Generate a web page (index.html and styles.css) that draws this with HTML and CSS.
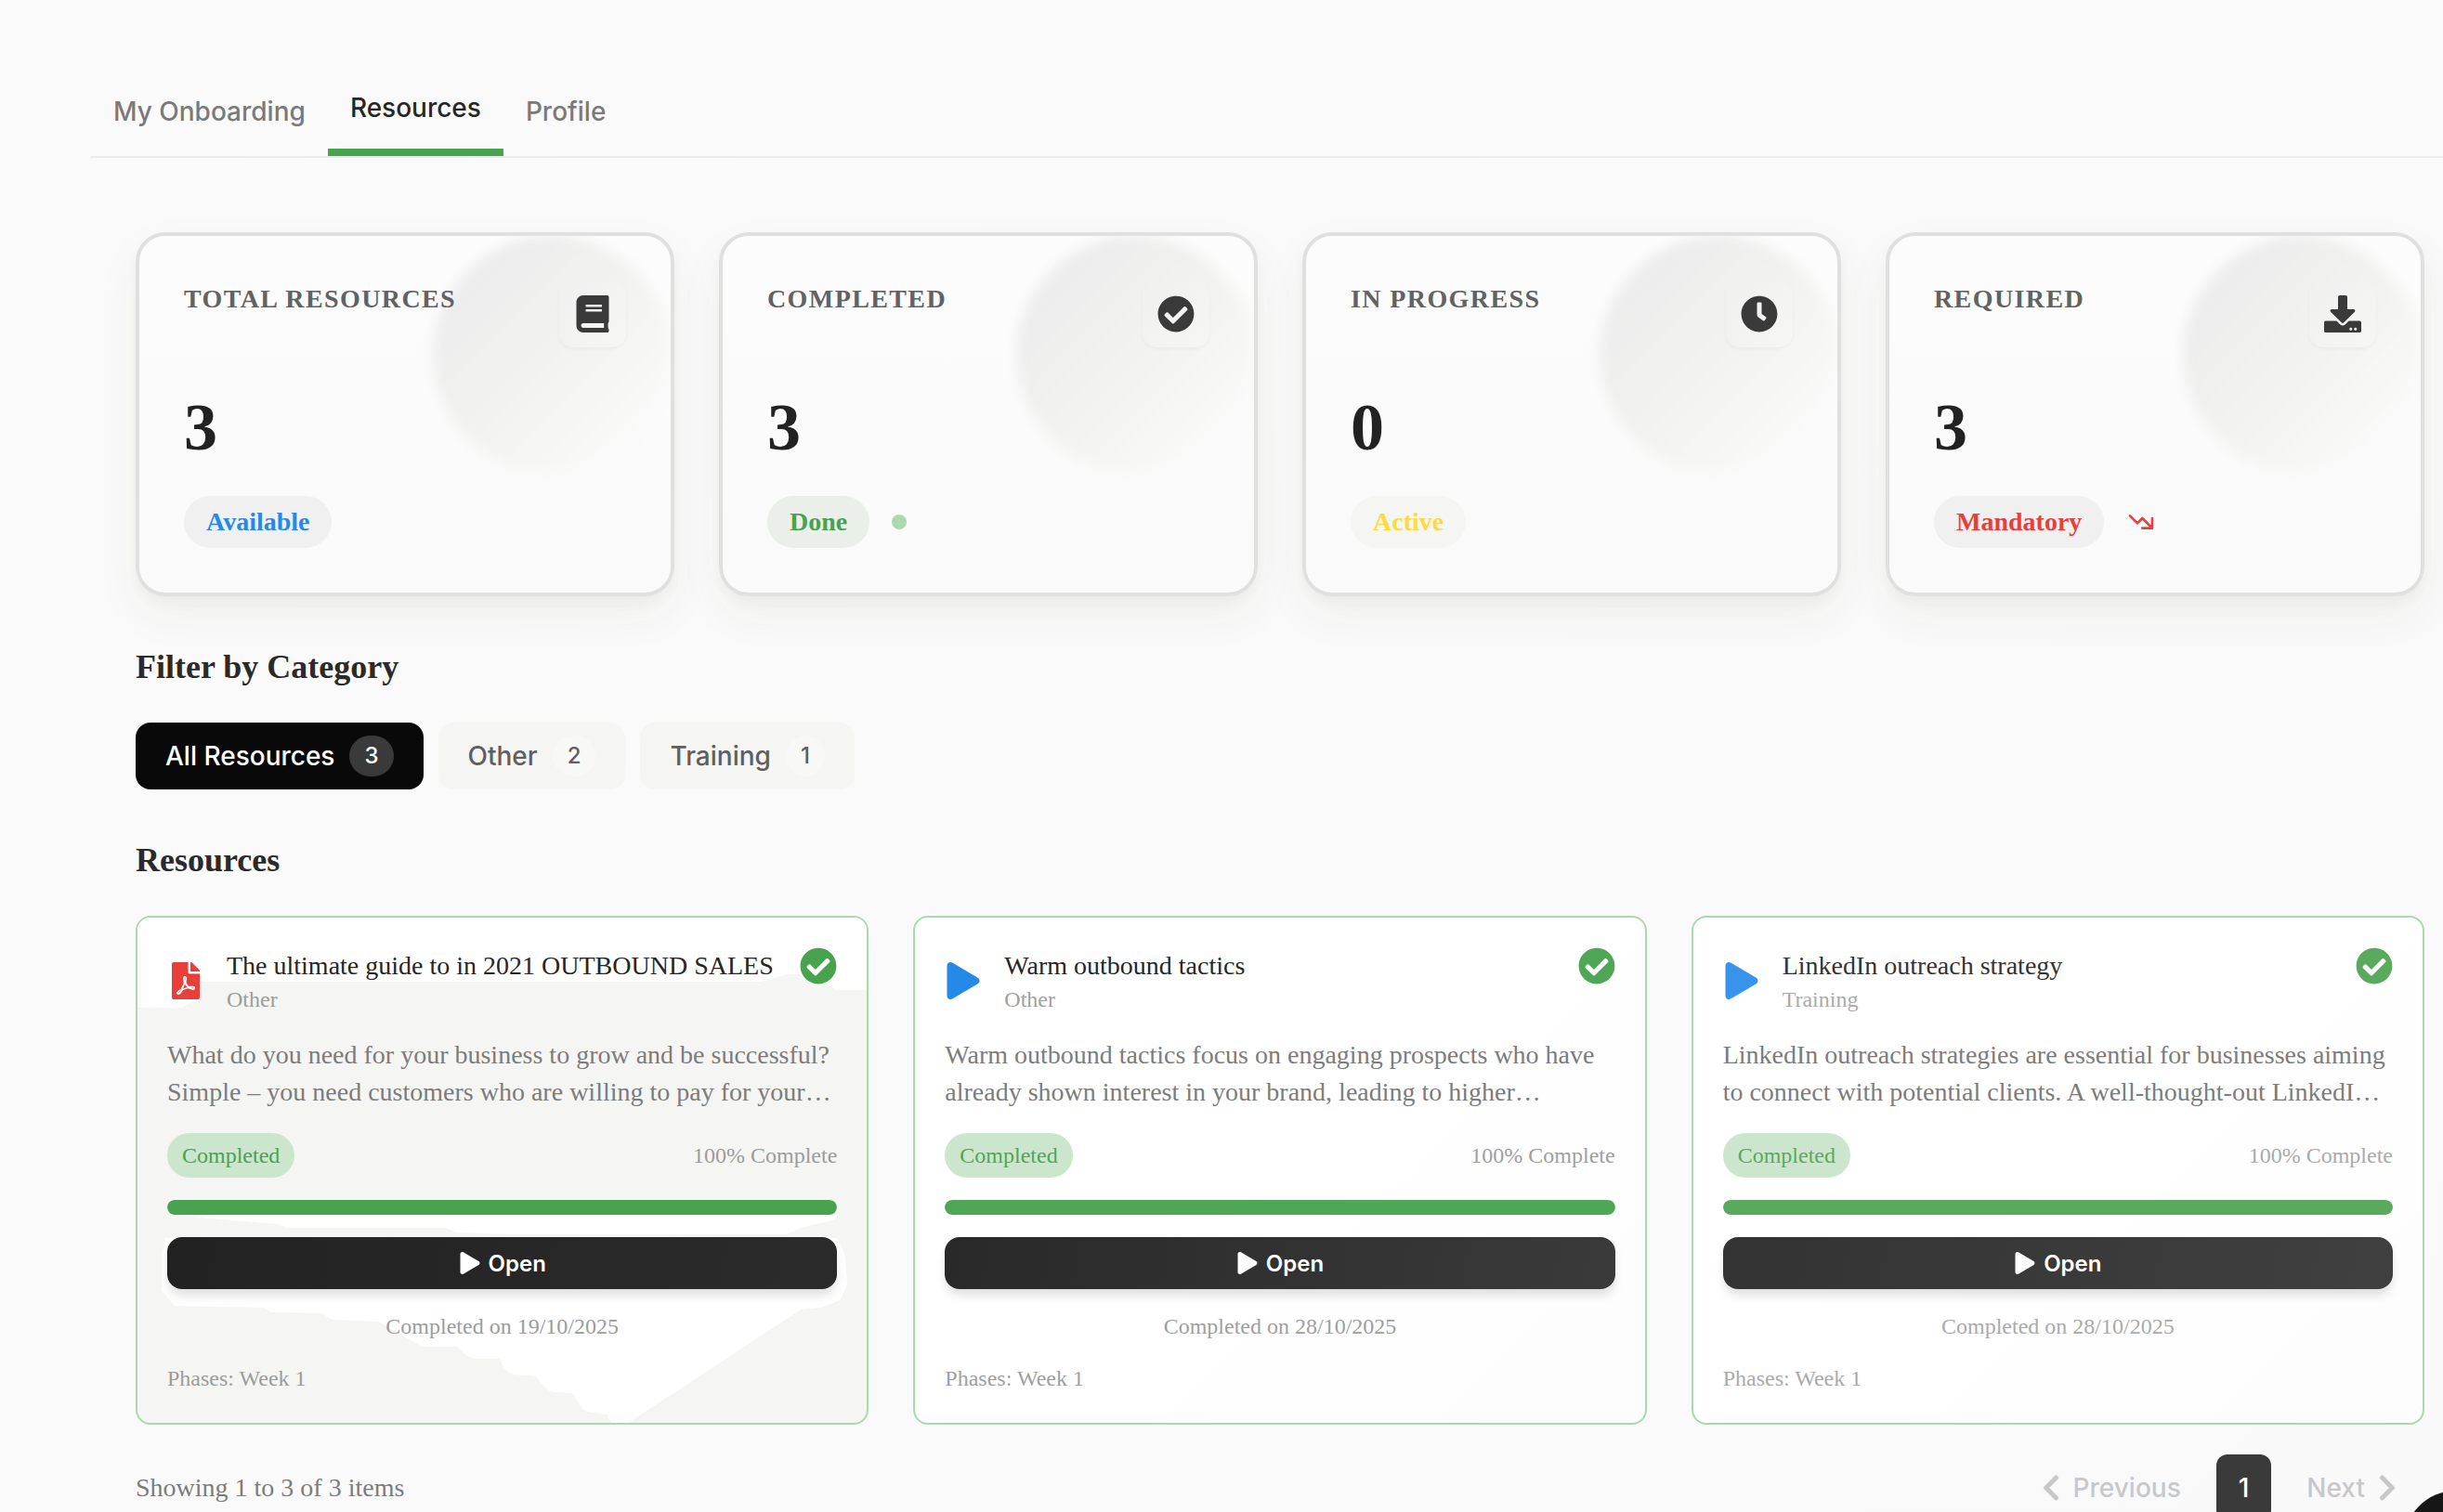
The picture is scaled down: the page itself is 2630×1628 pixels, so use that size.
FILE: index.html
```
<!DOCTYPE html>
<html lang="en">
<head>
  <meta charset="UTF-8">
  <meta name="viewport" content="width=device-width, initial-scale=1.0">
  <title>Onboarding - Resources</title>
  <link rel="stylesheet" href="styles.css">
</head>
<body>

  <!-- Icon sprite -->
  <svg class="sprite" aria-hidden="true">
    <symbol id="icon-book" viewBox="0 0 448 512"><path d="M448 360V24c0-13.3-10.7-24-24-24H96C43 0 0 43 0 96v320c0 53 43 96 96 96h328c13.3 0 24-10.7 24-24v-16c0-7.5-3.5-14.3-8.9-18.7-4.2-15.4-4.2-59.3 0-74.7 5.4-4.3 8.9-11.1 8.9-18.6zM128 134c0-3.3 2.7-6 6-6h212c3.3 0 6 2.7 6 6v20c0 3.3-2.7 6-6 6H134c-3.3 0-6-2.7-6-6v-20zm0 64c0-3.3 2.7-6 6-6h212c3.3 0 6 2.7 6 6v20c0 3.3-2.7 6-6 6H134c-3.3 0-6-2.7-6-6v-20zm253.4 250H96c-17.7 0-32-14.3-32-32 0-17.6 14.4-32 32-32h285.4c-1.9 17.1-1.9 46.9 0 64z"/></symbol>
    <symbol id="icon-check" viewBox="0 0 512 512"><path d="M504 256c0 136.967-111.033 248-248 248S8 392.967 8 256 119.033 8 256 8s248 111.033 248 248zM227.314 387.314l184-184c6.248-6.248 6.248-16.379 0-22.627l-22.627-22.627c-6.248-6.249-16.379-6.249-22.628 0L216 308.118l-70.059-70.059c-6.248-6.248-16.379-6.248-22.628 0l-22.627 22.627c-6.248 6.248-6.248 16.379 0 22.627l104 104c6.249 6.249 16.379 6.249 22.628.001z"/></symbol>
    <symbol id="icon-clock" viewBox="0 0 512 512"><path d="M256,8C119,8,8,119,8,256S119,504,256,504,504,393,504,256,393,8,256,8Zm92.49,313h0l-20,25a16,16,0,0,1-22.49,2.5h0l-67-49.72a40,40,0,0,1-15-31.23V112a16,16,0,0,1,16-16h32a16,16,0,0,1,16,16V256l58,42.5A16,16,0,0,1,348.49,321Z"/></symbol>
    <symbol id="icon-download" viewBox="0 0 512 512"><path d="M216 0h80c13.3 0 24 10.7 24 24v168h87.7c17.8 0 26.7 21.5 14.1 34.1L269.7 378.3c-7.5 7.5-19.8 7.5-27.3 0L90.1 226.1c-12.6-12.6-3.7-34.1 14.1-34.1H192V24c0-13.3 10.7-24 24-24zm296 376v112c0 13.3-10.7 24-24 24H24c-13.3 0-24-10.7-24-24V376c0-13.3 10.7-24 24-24h146.7l49 49c20.1 20.1 52.5 20.1 72.6 0l49-49H488c13.3 0 24 10.7 24 24zm-124 88c0-11-9-20-20-20s-20 9-20 20 9 20 20 20 20-9 20-20zm64 0c0-11-9-20-20-20s-20 9-20 20 9 20 20 20 20-9 20-20z"/></symbol>
    <symbol id="icon-play" viewBox="0 0 448 512"><path d="M424.4 214.7L72.4 6.6C43.8-10.3 0 6.1 0 47.9V464c0 37.5 40.7 60.1 72.4 41.3l352-208c31.4-18.5 31.5-64.1 0-82.6z"/></symbol>
    <symbol id="icon-pdf" viewBox="0 0 384 512"><path d="M181.9 256.1c-5-16-4.9-46.9-2-46.9 8.4 0 7.6 36.9 2 46.9zm-1.7 47.2c-7.7 20.2-17.3 43.3-28.4 62.7 18.3-7 39-17.2 62.9-21.9-12.7-9.6-24.9-23.4-34.5-40.8zM86.1 428.1c0 .8 13.2-5.4 34.9-40.2-6.7 6.3-29.1 24.5-34.9 40.2zM248 160h136v328c0 13.3-10.7 24-24 24H24c-13.3 0-24-10.7-24-24V24C0 10.7 10.7 0 24 0h200v136c0 13.2 10.8 24 24 24zm-8 171.8c-20-12.2-33.3-29-42.7-53.8 4.5-18.5 11.6-46.6 6.2-64.2-4.7-29.4-42.4-26.5-47.8-6.8-5 18.3-.4 44.1 8.1 77-11.6 27.6-28.7 64.6-40.8 85.8-.1 0-.1.1-.2.1-27.1 13.9-73.6 44.5-54.5 68 5.6 6.9 16 10 21.5 10 17.9 0 35.7-18 61.1-61.8 25.8-8.5 54.1-19.1 79-23.2 21.7 11.8 47.1 19.5 64 19.5 29.2 0 31.2-32 19.7-43.4-13.9-13.6-54.3-9.7-73.6-7.2zM377 105L279 7c-4.5-4.5-10.6-7-17-7h-6v128h128v-6.1c0-6.3-2.5-12.4-7-16.9zm-74.1 255.3c4.1-2.7-2.5-11.9-42.8-9 37.1 15.8 42.8 9 42.8 9z"/></symbol>
    <symbol id="icon-left" viewBox="0 0 320 512"><path d="M34.52 239.03L228.87 44.69c9.37-9.37 24.57-9.37 33.94 0l22.67 22.67c9.36 9.36 9.37 24.52.04 33.9L131.49 256l154.02 154.75c9.34 9.38 9.32 24.54-.04 33.9l-22.67 22.67c-9.37 9.37-24.57 9.37-33.94 0L34.52 272.97c-9.37-9.37-9.37-24.57 0-33.94z"/></symbol>
    <symbol id="icon-right" viewBox="0 0 320 512"><path d="M285.476 272.971L91.132 467.314c-9.373 9.373-24.569 9.373-33.941 0l-22.667-22.667c-9.357-9.357-9.375-24.522-.04-33.901L188.505 256 34.484 101.255c-9.335-9.379-9.317-24.544.04-33.901l22.667-22.667c9.373-9.373 24.569-9.373 33.941 0L285.475 239.03c9.373 9.372 9.373 24.568.001 33.941z"/></symbol>
    <symbol id="icon-down" viewBox="0 0 24 24"><path d="M13 17h8m0 0V9m0 8l-8-8-4 4-6-6" fill="none" stroke="currentColor" stroke-width="2" stroke-linecap="round" stroke-linejoin="round"/></symbol>
  </svg>

  <nav class="tabs">
    <a class="tab" href="#onboarding">My Onboarding</a>
    <a class="tab active" href="#resources">Resources</a>
    <a class="tab" href="#profile">Profile</a>
  </nav>

  <main class="content" id="resources">

    <section class="stats">
      <div class="stat-card">
        <div class="stat-head">
          <h3>Total Resources</h3>
          <div class="stat-icon"><svg><use href="#icon-book"/></svg></div>
        </div>
        <div class="stat-value">3</div>
        <div class="stat-foot">
          <span class="chip blue">Available</span>
        </div>
      </div>

      <div class="stat-card">
        <div class="stat-head">
          <h3>Completed</h3>
          <div class="stat-icon"><svg><use href="#icon-check"/></svg></div>
        </div>
        <div class="stat-value">3</div>
        <div class="stat-foot">
          <span class="chip green">Done</span>
          <span class="dot"></span>
        </div>
      </div>

      <div class="stat-card">
        <div class="stat-head">
          <h3>In Progress</h3>
          <div class="stat-icon"><svg><use href="#icon-clock"/></svg></div>
        </div>
        <div class="stat-value">0</div>
        <div class="stat-foot">
          <span class="chip yellow">Active</span>
        </div>
      </div>

      <div class="stat-card">
        <div class="stat-head">
          <h3>Required</h3>
          <div class="stat-icon"><svg><use href="#icon-download"/></svg></div>
        </div>
        <div class="stat-value">3</div>
        <div class="stat-foot">
          <span class="chip red">Mandatory</span>
          <svg class="trend"><use href="#icon-down"/></svg>
        </div>
      </div>
    </section>

    <h2>Filter by Category</h2>
    <div class="filters">
      <button type="button" class="filter active">All Resources <span class="count">3</span></button>
      <button type="button" class="filter">Other <span class="count">2</span></button>
      <button type="button" class="filter">Training <span class="count">1</span></button>
    </div>

    <h2>Resources</h2>
    <section class="resources">
      <article class="resource shaded">
        <!-- light shapes behind the card text -->
        <svg class="backdrop" viewBox="0 0 785 544" preserveAspectRatio="none" aria-hidden="true">
          <path d="M0 0H785V78H751L740 68L722 61H700L685 65L670 69H68V88L60 90L47 97H0Z"/>
          <path d="M34 320L149 330L160 334H332L343 339L398 341H698L714 334L751 325L753 320Z"/>
          <path d="M30 345L26 362V402L40 418L136 420L144 425L199 426L209 433L259 435L306 462H345Q354 475 364 475H390Q396 492 406 492L429 494Q440 511 450 511L469 512Q478 533 489 533L505 535L510 544H528L714 422L735 420L756 412L764 395L761 362L753 345Z"/>
        </svg>
        <div class="resource-head">
          <div class="type-icon pdf"><svg><use href="#icon-pdf"/></svg></div>
          <div class="resource-title">
            <h4>The ultimate guide to in 2021 OUTBOUND SALES</h4>
            <p>Other</p>
          </div>
          <svg class="done-icon"><use href="#icon-check"/></svg>
        </div>
        <p class="description">What do you need for your business to grow and be successful? Simple – you need customers who are willing to pay for your…</p>
        <div class="status">
          <span class="badge">Completed</span>
          <span>100% Complete</span>
        </div>
        <div class="progress"><div class="bar" style="width: 100%"></div></div>
        <button type="button" class="open"><svg><use href="#icon-play"/></svg>Open</button>
        <p class="date">Completed on 19/10/2025</p>
        <p class="phases">Phases: Week 1</p>
      </article>

      <article class="resource">
        <div class="resource-head">
          <div class="type-icon"><svg><use href="#icon-play"/></svg></div>
          <div class="resource-title">
            <h4>Warm outbound tactics</h4>
            <p>Other</p>
          </div>
          <svg class="done-icon"><use href="#icon-check"/></svg>
        </div>
        <p class="description">Warm outbound tactics focus on engaging prospects who have already shown interest in your brand, leading to higher…</p>
        <div class="status">
          <span class="badge">Completed</span>
          <span>100% Complete</span>
        </div>
        <div class="progress"><div class="bar" style="width: 100%"></div></div>
        <button type="button" class="open"><svg><use href="#icon-play"/></svg>Open</button>
        <p class="date">Completed on 28/10/2025</p>
        <p class="phases">Phases: Week 1</p>
      </article>

      <article class="resource">
        <div class="resource-head">
          <div class="type-icon"><svg><use href="#icon-play"/></svg></div>
          <div class="resource-title">
            <h4>LinkedIn outreach strategy</h4>
            <p>Training</p>
          </div>
          <svg class="done-icon"><use href="#icon-check"/></svg>
        </div>
        <p class="description">LinkedIn outreach strategies are essential for businesses aiming to connect with potential clients. A well-thought-out LinkedI…</p>
        <div class="status">
          <span class="badge">Completed</span>
          <span>100% Complete</span>
        </div>
        <div class="progress"><div class="bar" style="width: 100%"></div></div>
        <button type="button" class="open"><svg><use href="#icon-play"/></svg>Open</button>
        <p class="date">Completed on 28/10/2025</p>
        <p class="phases">Phases: Week 1</p>
      </article>
    </section>

    <footer class="pagination">
      <p>Showing 1 to 3 of 3 items</p>
      <div class="pages">
        <button type="button" class="page-btn" disabled><svg><use href="#icon-left"/></svg>Previous</button>
        <button type="button" class="page-btn current">1</button>
        <button type="button" class="page-btn" disabled>Next<svg><use href="#icon-right"/></svg></button>
      </div>
    </footer>

  </main>

  <button type="button" class="chat-btn" aria-label="Open chat"></button>

</body>
</html>
```
FILE: styles.css
```
* {
  box-sizing: border-box;
}

html {
  scrollbar-width: none;
}

body {
  margin: 0;
  padding: 72px 0 0 98px;
  font-family: "Liberation Serif", "Times New Roman", serif;
  font-size: 28px;
  line-height: 40px;
  color: #262626;
  background: linear-gradient(135deg, #fafafa, #f9f9f9);
  overflow-x: hidden;
}

h2, h3, h4, p {
  margin: 0;
}

button {
  border: none;
  font-family: Inter, sans-serif;
  font-weight: 500;
  cursor: pointer;
}

svg {
  fill: currentColor;
}

.sprite {
  position: absolute;
  width: 0;
  height: 0;
}

/* Tabs */
.tabs {
  display: flex;
  height: 98px;
  border-bottom: 2px solid #ebebeb;
}

.tab {
  display: flex;
  align-items: center;
  padding: 0 24px;
  font-family: Inter, sans-serif;
  font-weight: 500;
  color: #7a7a7a;
  text-decoration: none;
}

.tab.active {
  color: #262626;
  border-bottom: 8px solid #47a34e;
}

.content {
  padding: 80px 20px 0 48px;
}

/* Stat cards */
.stats {
  display: grid;
  grid-template-columns: repeat(4, 1fr);
  gap: 48px;
}

.stat-card {
  position: relative;
  overflow: hidden;
  padding: 48px;
  border: 4px solid #e0e0e0;
  border-radius: 32px;
  background: linear-gradient(#fcfcfc, #fafafa);
  box-shadow: 0 20px 50px rgba(60, 50, 30, 0.05), 0 8px 12px rgba(60, 50, 30, 0.03);
}

.stat-card::before {
  content: "";
  position: absolute;
  top: 0;
  right: 0;
  width: 256px;
  height: 256px;
  border-radius: 50%;
  background: linear-gradient(135deg, #ededed 20%, #f4f4f2 60%, #fafafa 85%);
  filter: blur(6px);
}

.stat-head {
  position: relative;
  display: flex;
  justify-content: space-between;
  align-items: flex-start;
}

.stat-head h3 {
  font-size: 28px;
  letter-spacing: 0.05em;
  text-transform: uppercase;
  color: #626262;
}

.stat-icon {
  display: flex;
  align-items: center;
  justify-content: center;
  width: 72px;
  height: 72px;
  border-radius: 16px;
  color: #3a3a3a;
  background: linear-gradient(135deg, #f0f0f0, #f6f6f4);
  box-shadow: 0 2px 4px rgba(0, 0, 0, 0.04);
}

.stat-icon svg {
  width: 40px;
  height: 40px;
}

.stat-value {
  margin: 46px 0 34px;
  font-size: 72px;
  font-weight: bold;
  line-height: 80px;
  color: #222;
}

.stat-foot {
  display: flex;
  align-items: center;
  gap: 24px;
}

.chip {
  padding: 8px 24px;
  border-radius: 28px;
  font-weight: bold;
  background: #f0f0f0;
}

.chip.blue { color: #2589e8; }
.chip.green { color: #47a34e; background: #ebefea; }
.chip.yellow { color: #fddb3a; background: #f5f5f3; }
.chip.red { color: #e83f3b; }

.dot {
  width: 16px;
  height: 16px;
  border-radius: 50%;
  background: #a9d9ad;
}

.trend {
  width: 32px;
  height: 32px;
  color: #e83f3b;
}

h2 {
  margin: 48px 0 32px;
  font-size: 36px;
  line-height: 56px;
  color: #2a2a2a;
}

/* Filters */
.filters {
  display: flex;
  gap: 16px;
}

.filter {
  display: flex;
  align-items: center;
  gap: 16px;
  height: 72px;
  padding: 0 32px;
  border-radius: 16px;
  font-size: 28px;
  color: #5f5f5f;
  background: #f5f5f3;
}

.filter.active {
  color: #fff;
  background: #090909;
}

.count {
  padding: 4px 16px;
  border-radius: 24px;
  font-size: 24px;
  line-height: 36px;
  background: #f8f8f7;
}

.filter.active .count {
  background: #3a3a3a;
}

/* Resource cards */
.resources {
  display: grid;
  grid-template-columns: repeat(3, 1fr);
  gap: 48px;
}

.resource {
  --title: #262626;
  --green: #47a34e;
  --blue: #2589e8;
  --muted: #9c9c9c;
  --btn-start: #222;
  --btn-end: #2b2b2b;
  position: relative;
  display: flex;
  flex-direction: column;
  gap: 24px;
  padding: 32px;
  border: 2px solid #a9d9ad;
  border-radius: 16px;
  font-size: 24px;
  line-height: 32px;
  color: var(--muted);
  background: linear-gradient(135deg, #fff 40%, #fdfdfd);
}

.resource:nth-child(2) {
  --green: #4fa755;
  --muted: #9f9f9f;
  --btn-start: #292929;
  --btn-end: #3a3a3a;
}

.resource:nth-child(3) {
  --title: #333;
  --green: #59aa5c;
  --blue: #3893ea;
  --muted: #aaa;
  --btn-start: #333;
  --btn-end: #404040;
}

.resource.shaded {
  background: #f5f5f3;
}

.resource > * {
  position: relative;
}

.resource .backdrop {
  position: absolute;
  top: 0;
  left: 0;
  width: 100%;
  height: 100%;
  border-radius: 14px;
  fill: #fff;
}

.resource-head {
  display: flex;
  align-items: center;
  gap: 24px;
}

.type-icon {
  display: flex;
  width: 40px;
  color: var(--blue);
}

.type-icon.pdf {
  color: #e83f3b;
}

.type-icon svg {
  width: 40px;
  height: 40px;
}

.resource-title {
  flex: 1;
}

.resource-title h4 {
  font-size: 28px;
  font-weight: normal;
  line-height: 40px;
  color: var(--title);
}

.done-icon {
  align-self: flex-start;
  width: 40px;
  height: 40px;
  color: var(--green);
}

.description {
  font-size: 28px;
  line-height: 40px;
  color: #7c7c7c;
}

.status {
  display: flex;
  align-items: center;
  justify-content: space-between;
}

.badge {
  padding: 8px 16px;
  border-radius: 24px;
  color: var(--green);
  background: #cbe6cc;
}

.progress {
  height: 16px;
  border-radius: 8px;
  overflow: hidden;
  background: #e0e0e0;
}

.bar {
  height: 100%;
  border-radius: 8px;
  background: var(--green);
}

.open {
  display: flex;
  align-items: center;
  justify-content: center;
  gap: 8px;
  height: 56px;
  border-radius: 16px;
  font-size: 24px;
  font-weight: 600;
  color: #fff;
  background: linear-gradient(100deg, var(--btn-start), var(--btn-end));
  box-shadow: 0 8px 12px -2px rgba(0, 0, 0, 0.14);
}

.open svg {
  width: 24px;
  height: 24px;
}

.date {
  text-align: center;
}

/* Pagination */
.pagination {
  display: flex;
  align-items: center;
  justify-content: space-between;
  margin-top: 32px;
  color: #7c7c7c;
}

.pages {
  display: flex;
  gap: 8px;
}

.page-btn {
  display: flex;
  align-items: center;
  gap: 14px;
  height: 72px;
  padding: 0 30px;
  border-radius: 12px;
  font-size: 28px;
  color: #c8c8ca;
  background: none;
}

.page-btn.current {
  padding: 0 24px;
  color: #fff;
  background: #3a3a3a;
}

.page-btn svg {
  width: 20px;
  height: 32px;
}

/* Chat button tucked in the window corner */
.chat-btn {
  position: fixed;
  right: -70px;
  bottom: -89px;
  width: 112px;
  height: 112px;
  border-radius: 50%;
  background: #161616;
}
```
